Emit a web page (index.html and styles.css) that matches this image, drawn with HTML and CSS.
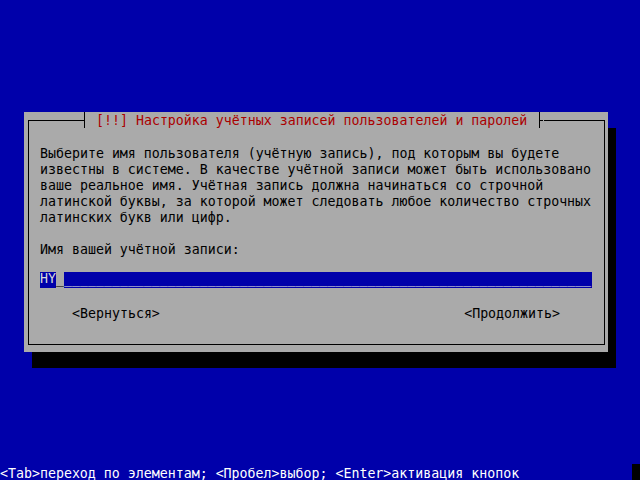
FILE: index.html
```html
<!doctype html>
<html lang="ru">
<head>
  <meta charset="UTF-8">
  <meta name="viewport" content="width=device-width, initial-scale=1.0">
  <title>Настройка учётных записей пользователей и паролей</title>
  <link rel="stylesheet" href="styles.css">
</head>
<body>
  <div class="screen">
    <div class="dialog">
      <div class="frame">
        <div class="title"><span class="tee tee-l"></span><span class="caption"> [!!] Настройка учётных записей пользователей и паролей </span><span class="tee tee-r"></span></div>
        <p class="text">Выберите имя пользователя (учётную запись), под которым вы будете
известны в системе. В качестве учётной записи может быть использовано
ваше реальное имя. Учётная запись должна начинаться со строчной
латинской буквы, за которой может следовать любое количество строчных
латинских букв или цифр.</p>
        <p class="label">Имя вашей учётной записи:</p>
        <div class="entry"><span class="value">HY</span><span class="cursor">_</span><span class="fill">__________________________________________________________________</span></div>
        <div class="buttons">
          <span class="btn">&lt;Вернуться&gt;</span>
          <span class="btn">&lt;Продолжить&gt;</span>
        </div>
      </div>
    </div>
    <div class="status">
      <span class="hint">&lt;Tab&gt;переход по элементам; &lt;Пробел&gt;выбор; &lt;Enter&gt;активация кнопок</span>
      <span class="block"></span>
    </div>
  </div>
</body>
</html>
```

FILE: styles.css
```css
html, body {
  margin: 0;
  padding: 0;
  background: #0000aa;
}
.screen {
  display: flex;
  flex-direction: column;
  width: 640px;
  height: 480px;
  overflow: hidden;
  font-family: "DejaVu Sans Mono", "Liberation Mono", monospace;
  font-size: 13.287px;
  line-height: 16px;
}
.dialog {
  width: 584px;
  height: 240px;
  margin: 112px 0 0 24px;
  background: #aaaaaa;
  box-shadow: 8px 16px 0 #000;
  padding: 8px 3px 7px 4px;
  box-sizing: border-box;
  color: #000;
}
.frame {
  height: 100%;
  box-sizing: border-box;
  border: 1px solid #000;
}
.title {
  display: flex;
  width: 464px;
  height: 16px;
  margin: -9px 0 0 51px;
  background: #aaaaaa;
  color: #aa0000;
  line-height: 14px;
}
.caption {
  white-space: pre;
  padding-top: 2px;
}
.tee {
  display: inline-block;
  width: 8px;
  height: 16px;
  flex: none;
}
.tee-l {
  background:
    linear-gradient(#000, #000) 4px 0 / 1px 16px no-repeat,
    linear-gradient(#000, #000) 0 8px / 4px 1px no-repeat;
}
.tee-r {
  background:
    linear-gradient(#000, #000) 4px 0 / 1px 16px no-repeat,
    linear-gradient(#000, #000) 5px 8px / 3px 1px no-repeat;
}
/* text sits 2px low in its 16px cell, like the console font */
.text {
  margin: 18px 0 0 11px;
  white-space: pre;
}
.label {
  margin: 16px 0 0 11px;
}
.entry {
  display: flex;
  width: 552px;
  height: 16px;
  margin: 14px 0 0 11px;
  color: #d8d8d8;
  line-height: 14px;
}
.entry span {
  padding-bottom: 2px;
}
.entry .value {
  background: #0000aa;
}
.entry .cursor {
  color: #000;
}
.entry .fill {
  width: 528px;
  background: #0000aa;
}
.buttons {
  display: flex;
  justify-content: space-between;
  margin-top: 18px;
  padding: 0 44px 0 43px;
}
.btn {
  white-space: pre;
}
.status {
  display: flex;
  align-items: flex-start;
  margin-top: auto;
  height: 16px;
  color: #ffffff;
}
.hint {
  white-space: pre;
  padding-top: 2px;
}
.status .block {
  width: 8px;
  height: 16px;
  margin-left: auto;
  background: #000;
}
```
